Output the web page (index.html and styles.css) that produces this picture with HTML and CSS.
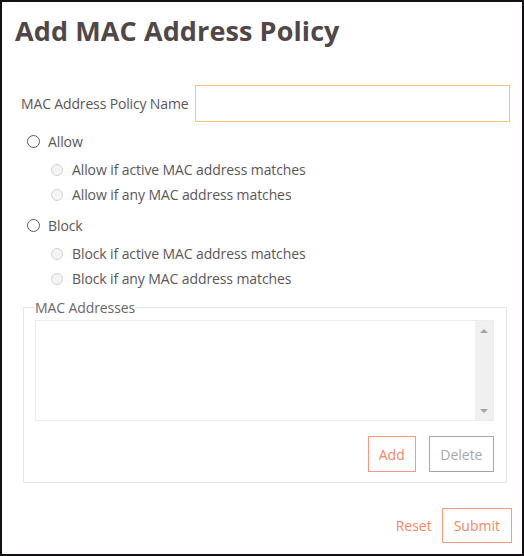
FILE: index.html
```html
<!DOCTYPE html>
<html lang="en">
<head>
    <meta charset="UTF-8">
    <title>Add MAC Address Policy</title>
    <link rel="stylesheet" href="styles.css">
</head>
<body>
    <h1 class="title">Add MAC Address Policy</h1>
    <form class="policy-form">
        <div class="name-row">
            <label class="name-label" for="policy-name">MAC Address Policy Name</label>
            <input type="text" id="policy-name" class="name-input">
        </div>

        <div class="choice">
            <span class="radio"></span>
            <span class="choice-text">Allow</span>
        </div>
        <div class="sub-choice">
            <span class="radio radio-off"></span>
            <span class="choice-text">Allow if active MAC address matches</span>
        </div>
        <div class="sub-choice">
            <span class="radio radio-off"></span>
            <span class="choice-text">Allow if any MAC address matches</span>
        </div>

        <div class="choice choice-second">
            <span class="radio"></span>
            <span class="choice-text">Block</span>
        </div>
        <div class="sub-choice">
            <span class="radio radio-off"></span>
            <span class="choice-text">Block if active MAC address matches</span>
        </div>
        <div class="sub-choice">
            <span class="radio radio-off"></span>
            <span class="choice-text">Block if any MAC address matches</span>
        </div>

        <fieldset class="mac-box">
            <legend class="mac-legend">MAC Addresses</legend>
            <div class="mac-list">
                <div class="mac-list-body"></div>
                <div class="scrollbar">
                    <span class="arrow-up"></span>
                    <span class="arrow-down"></span>
                </div>
            </div>
            <div class="list-buttons">
                <button type="button" class="btn btn-accent">Add</button>
                <button type="button" class="btn btn-grey">Delete</button>
            </div>
        </fieldset>

        <div class="form-buttons">
            <button type="reset" class="link-button">Reset</button>
            <button type="submit" class="btn btn-accent btn-submit">Submit</button>
        </div>
    </form>
</body>
</html>
```

FILE: styles.css
```css
html {
    margin: 0;
}
body {
    margin: 0;
    width: 524px;
    height: 556px;
    box-sizing: border-box;
    border: 2px solid #140f14;
    background-color: #ffffff;
    font-family: "Open Sans", "Noto Sans", sans-serif;
    color: #5b5658;
    overflow: hidden;
}
.title {
    margin: 11px 0 0 13px;
    font-size: 27px;
    line-height: 36px;
    font-weight: bold;
    color: #4f4748;
    letter-spacing: 0.1px;
}
.policy-form {
    display: flex;
    flex-direction: column;
}
.name-row {
    display: flex;
    align-items: center;
    margin: 36px 12px 0 19px;
}
.name-label {
    font-size: 14px;
    color: #5b5658;
    margin-right: 7px;
    letter-spacing: -0.15px;
}
.name-input {
    flex: 1;
    height: 37px;
    box-sizing: border-box;
    border: 1px solid #f9c66e;
    outline: none;
    padding: 0 6px;
    font-family: inherit;
    background-color: #ffffff;
}
.choice, .sub-choice {
    display: flex;
    align-items: center;
    font-size: 14px;
    height: 25px;
    letter-spacing: -0.1px;
}
.choice {
    margin: 7px 0 0 25px;
}
.choice-second {
    margin-top: 6px;
}
.sub-choice {
    margin-left: 49px;
}
.choice + .sub-choice {
    margin-top: 3px;
}
.radio {
    width: 13px;
    height: 13px;
    border: 1px solid #5a5a5a;
    border-radius: 50%;
    box-sizing: border-box;
    margin-right: 8px;
    flex-shrink: 0;
}
.radio-off {
    width: 12px;
    height: 12px;
    border-color: #d3d3d3;
    background-color: #f4f4f4;
    margin-right: 9px;
}
.mac-box {
    margin: 7px 15px 0 21px;
    padding: 3px 12px 10px 11px;
    border: 1px solid #e6e6e6;
    box-sizing: border-box;
}
.mac-legend {
    font-size: 14px;
    color: #6b6668;
    padding: 0 1px;
    margin-left: -1px;
    letter-spacing: -0.1px;
}
.mac-list {
    display: flex;
    height: 101px;
    box-sizing: border-box;
    border: 1px solid #ececec;
}
.mac-list-body {
    flex: 1;
}
.scrollbar {
    width: 18px;
    background-color: #f0f0f0;
    display: flex;
    flex-direction: column;
    justify-content: space-between;
    align-items: center;
    padding: 8px 0 7px;
}
.arrow-up {
    width: 0;
    height: 0;
    border-left: 4px solid transparent;
    border-right: 4px solid transparent;
    border-bottom: 4px solid #a3a3a3;
}
.arrow-down {
    width: 0;
    height: 0;
    border-left: 4px solid transparent;
    border-right: 4px solid transparent;
    border-top: 4px solid #a3a3a3;
}
.list-buttons {
    display: flex;
    justify-content: flex-end;
    gap: 13px;
    margin-top: 15px;
}
.btn {
    height: 36px;
    box-sizing: border-box;
    background-color: #ffffff;
    font-family: inherit;
    font-size: 14px;
    padding: 0 10px;
    cursor: pointer;
}
.btn-accent {
    border: 1px solid #f59a80;
    color: #f28868;
}
.btn-grey {
    border: 1px solid #aaa4a5;
    color: #a8a8a8;
    padding: 0 10.5px;
}
.form-buttons {
    display: flex;
    justify-content: flex-end;
    align-items: center;
    gap: 10px;
    margin: 25px 10px 0 0;
}
.link-button {
    border: none;
    background: none;
    font-family: inherit;
    font-size: 14px;
    color: #f28868;
    padding: 0;
    cursor: pointer;
}
.btn-submit {
    height: 35px;
    padding: 0 11px;
}
```
